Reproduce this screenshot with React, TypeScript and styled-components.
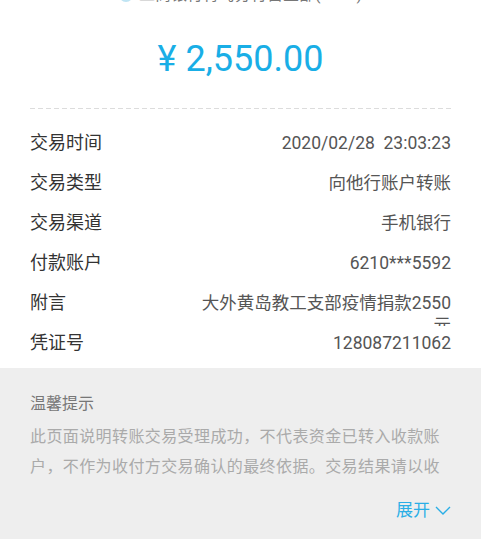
import React from "react";
import styled, { createGlobalStyle } from "styled-components";

const Global = createGlobalStyle`
  html, body { margin: 0; padding: 0; background: #ffffff; }
  body { font-family: Roboto, "Noto Sans CJK SC", sans-serif; overflow: hidden; }
  * { box-sizing: border-box; }
`;

const Page = styled.div`
  width: 481px;
  height: 539px;
  display: flex;
  flex-direction: column;
  background: #fff;
  overflow: hidden;
`;

const Header = styled.div`
  margin-top: -15px;
  height: 20px;
  display: flex;
  justify-content: center;
  align-items: center;
  gap: 6px;
  font-size: 16px;
  line-height: 20px;
  color: #777;
`;

const BankDot = styled.span`
  width: 14px;
  height: 14px;
  border-radius: 50%;
  border: 2px solid #bfe4f3;
`;

const Amount = styled.div`
  margin-top: 32px;
  text-align: center;
  font-size: 36px;
  line-height: 44px;
  color: #19aee6;
  font-family: Roboto, sans-serif;
`;

const Divider = styled.div`
  margin: 27px 30px 0 30px;
  height: 1px;
  background-image: linear-gradient(to right, #dcdcdc 0 5px, transparent 5px 8px);
  background-size: 8px 1px;
  background-repeat: repeat-x;
`;

const Rows = styled.div`
  padding: 14px 30px 5px 30px;
  display: flex;
  flex-direction: column;
`;

const Row = styled.div`
  height: 40px;
  display: flex;
  justify-content: space-between;
  align-items: flex-start;
`;

const Label = styled.div`
  font-size: 18px;
  line-height: 40px;
  color: #333;
  white-space: nowrap;
`;

const Value = styled.div<{ $wrap?: boolean }>`
  font-size: 17.5px;
  color: #555;
  text-align: right;
  ${(p) =>
    p.$wrap
      ? `line-height: 22px; padding-top: 9px; height: 43px; overflow: hidden; width: 260px; word-break: break-all;`
      : `line-height: 40px; white-space: pre;`}
`;

const Notice = styled.div`
  flex: 1;
  background: #eeeeee;
  padding: 24px 30px 0 30px;
  display: flex;
  flex-direction: column;
`;

const NoticeTitle = styled.div`
  font-size: 16px;
  line-height: 24px;
  color: #777;
`;

const NoticeBody = styled.div`
  margin-top: 6px;
  font-size: 16px;
  letter-spacing: 0.4px;
  line-height: 30px;
  max-height: 60px;
  overflow: hidden;
  color: #aaa;
`;

const Expand = styled.div`
  margin-top: 16px;
  align-self: flex-end;
  display: flex;
  align-items: center;
  gap: 5px;
  font-size: 17px;
  line-height: 24px;
  color: #2aaee6;
`;

const rows: { label: string; value: string; wrap?: boolean }[] = [
  { label: "交易时间", value: "2020/02/28  23:03:23" },
  { label: "交易类型", value: "向他行账户转账" },
  { label: "交易渠道", value: "手机银行" },
  { label: "付款账户", value: "6210***5592" },
  { label: "附言", value: "大外黄岛教工支部疫情捐款2550元", wrap: true },
  { label: "凭证号", value: "128087211062" },
];

export default function App() {
  return (
    <Page>
      <Global />
      <Header>
        <BankDot />
        <span>工商银行青岛分行营业部(5592)</span>
      </Header>
      <Amount>¥ 2,550.00</Amount>
      <Divider />
      <Rows>
        {rows.map((r) => (
          <Row key={r.label}>
            <Label>{r.label}</Label>
            <Value $wrap={r.wrap}>{r.value}</Value>
          </Row>
        ))}
      </Rows>
      <Notice>
        <NoticeTitle>温馨提示</NoticeTitle>
        <NoticeBody>
          此页面说明转账交易受理成功，不代表资金已转入收款账户，不作为收付方交易确认的最终依据。交易结果请以收款方实际到账为准。
        </NoticeBody>
        <Expand>
          展开
          <svg width="16" height="9" viewBox="0 0 16 9" fill="none">
            <path d="M1 1 L8 8 L15 1" stroke="#2aaee6" strokeWidth="1.4" />
          </svg>
        </Expand>
      </Notice>
    </Page>
  );
}
